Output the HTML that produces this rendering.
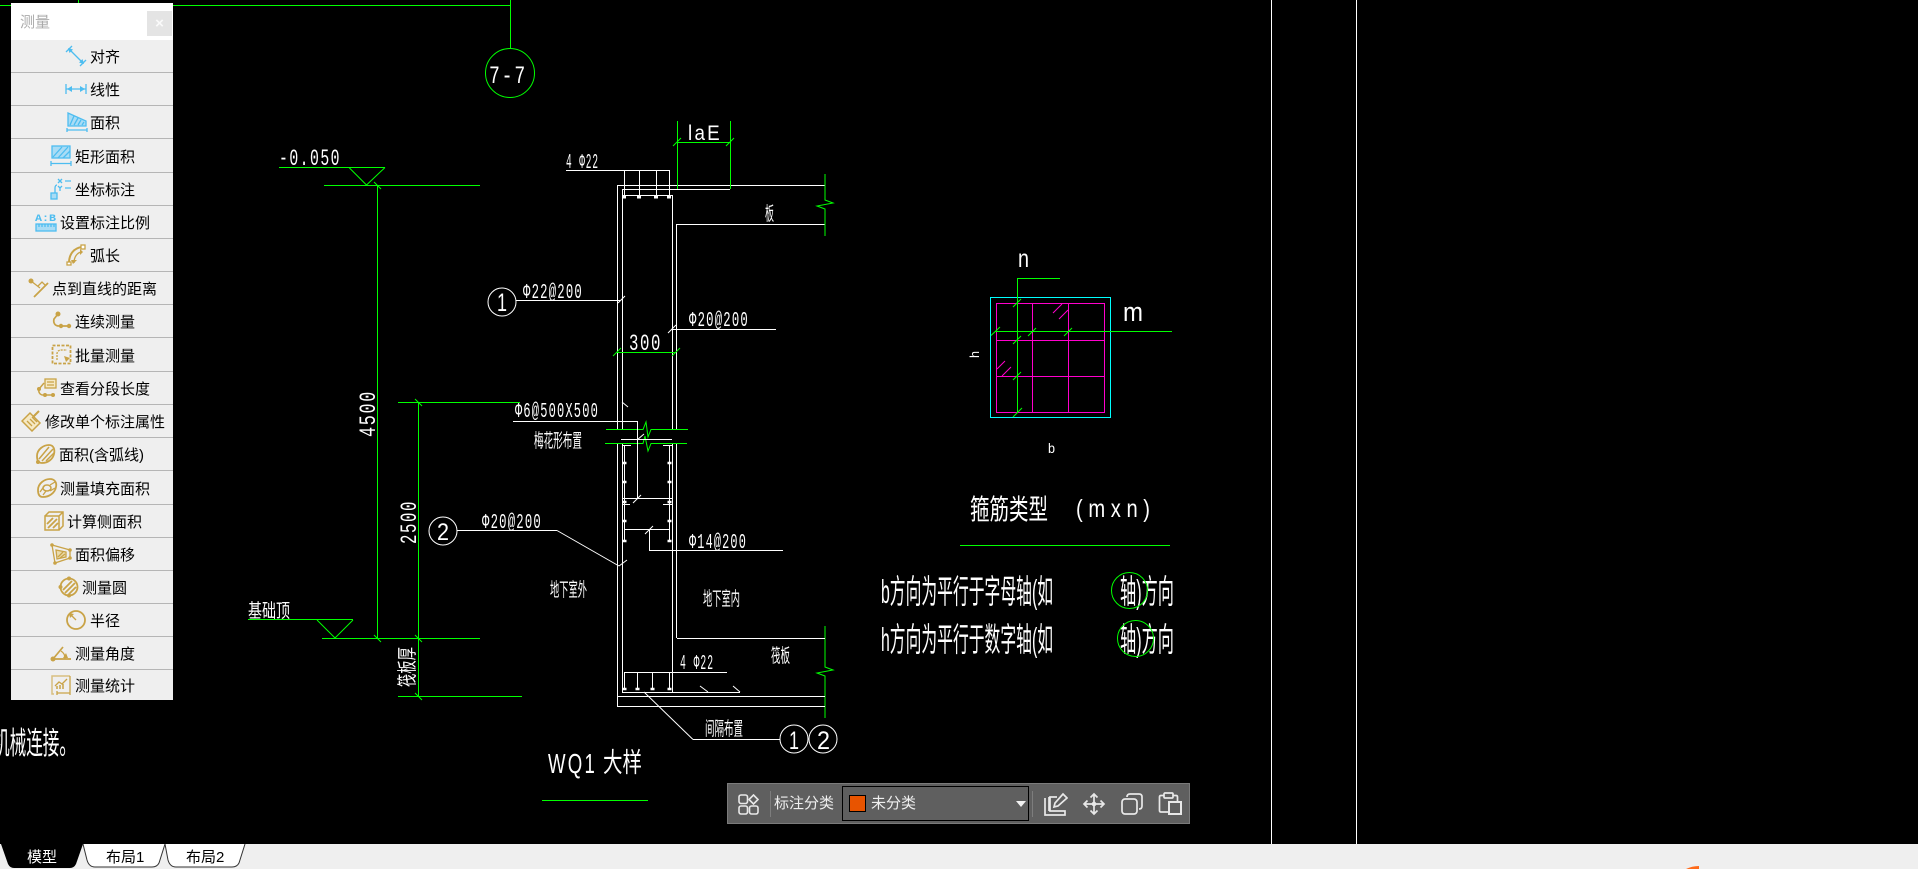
<!DOCTYPE html>
<html lang="zh"><head><meta charset="utf-8"><title>测量</title>
<style>
html,body{margin:0;padding:0;width:1918px;height:869px;overflow:hidden;background:#000}
body{position:relative;font-family:"Liberation Sans","WenQuanYi Zen Hei","Noto Sans CJK SC",sans-serif}
#cad{position:absolute;left:0;top:0}
#cad .l{font-family:"Liberation Sans",sans-serif;fill:#fff;letter-spacing:.12em}
#cad .n{font-family:"Liberation Mono",monospace;fill:#fff;letter-spacing:.1em}
#cad .c{font-family:"Noto Sans CJK SC",sans-serif;fill:#fff}
#cad .m{font-family:"Liberation Sans","Noto Sans CJK SC",sans-serif;fill:#fff}
.g{stroke:#0f0;fill:none;shape-rendering:crispEdges}
.w{stroke:#fff;fill:none;shape-rendering:crispEdges}
.ga{stroke:#0f0;fill:none}
.wa{stroke:#fff;fill:none}
#title{position:absolute;left:11px;top:3px;width:162px;height:37px;background:#fff;color:#aaa;font-size:15px;line-height:39px;text-indent:9px}
#x{position:absolute;left:136px;top:8px;width:25px;height:25px;background:#e4e4e4;color:#fafafa;text-align:center;line-height:25px;font-size:15px;font-weight:bold;text-indent:0}
.r{position:absolute;left:11px;width:162px;background:#efefef;border-bottom:1px solid #b5b5b5;color:#000;font-size:15px;box-sizing:content-box}
.r span{position:absolute;top:50%;margin-top:-9px;line-height:22px;white-space:nowrap}
.r svg{position:absolute;top:50%;margin-top:-11px;width:22px;height:22px;fill:none;stroke-width:1.3}
.b{stroke:#4dbdf0}.y{stroke:#c9a347}
.f1{fill:#4dbdf0;stroke:none}.f2{fill:#c9a347;stroke:none}
#strip{position:absolute;left:0;top:844px;width:1918px;height:25px;background:#efefef}
.tab{position:absolute;top:846px;font-size:15px;line-height:24px;white-space:nowrap}
#bar{position:absolute;left:727px;top:783px;width:461px;height:39px;background:#5f5f5f;border:1px solid #7b7b7b;color:#efefef;font-size:15px}
#bar span{position:absolute;line-height:20px;white-space:nowrap}
#dd{position:absolute;left:114px;top:2px;width:185px;height:33px;border:1px solid #000}
#sw{position:absolute;left:6px;top:8px;width:15px;height:15px;background:#e85400;border:1px solid #000}
#arrow{position:absolute;left:173px;top:14px;width:0;height:0;border-left:5px solid transparent;border-right:5px solid transparent;border-top:6px solid #f2f2f2}
.sep{position:absolute;width:1px;top:7px;height:26px;background:#7d7d7d}
</style></head><body>

<svg id="cad" width="1918" height="869" viewBox="0 0 1918 869">
<!-- frame lines -->
<path class="w" d="M1271.5 0V844M1356.5 0V844"/>
<path class="g" d="M0 5.5H510.5M510.5 0V49M78.5 0V5"/>
<circle class="ga" cx="510" cy="73" r="24.5"/>
<text class="n" x="489" y="83" font-size="25" textLength="38" lengthAdjust="spacingAndGlyphs">7-7</text>

<!-- left dims -->
<path class="g" d="M279 167.500H385M324 185.500H480M377.500 185V638M398 402.500H520M418.500 402V697M248 619.500H353M322 638.500H480M398 696.500H522"/>
<path class="ga" d="M349 167.500L366.500 185L385 167.500M317 620L335 638L353 620M374 182L381 189M374 635L381 642M415 399L422 406M415 635L422 642M415 693L422 700"/>
<text class="n" x="279" y="165" font-size="23" textLength="62" lengthAdjust="spacingAndGlyphs">-0.050</text>
<text class="n" transform="translate(375,437) rotate(-90)" font-size="23" textLength="47" lengthAdjust="spacingAndGlyphs">4500</text>
<text class="n" transform="translate(416,544) rotate(-90)" font-size="23" textLength="44" lengthAdjust="spacingAndGlyphs">2500</text>
<text class="c" x="248" y="617" font-size="19" textLength="42" lengthAdjust="spacingAndGlyphs">基础顶</text>
<text class="c" transform="translate(414,687) rotate(-90)" font-size="20" textLength="40" lengthAdjust="spacingAndGlyphs">筏板厚</text>
<circle class="wa" cx="443" cy="531" r="14"/>
<text class="m" x="437" y="540" font-size="24" textLength="12" lengthAdjust="spacingAndGlyphs">2</text>
<path class="w" d="M457 530.500H557"/>
<path class="wa" d="M557 530.500L619 566M619 566L627 560"/>
<text class="n" x="482" y="528" font-size="21" textLength="60" lengthAdjust="spacingAndGlyphs">Φ20@200</text>

<!-- wall -->
<path class="w" d="M617.500 185V429M622.500 189V429M672.500 195V429M676.500 224V429M617.500 443V706M622.500 443V692M672.500 443V692M676.500 443V638"/>
<path class="w" d="M617 185.500H825M622 189.500H730M622 195.500H672M566 170.500H669M624.500 170V197M639.500 170V197M656.500 170V197M669.500 170V197M677 224.500H825"/>
<path class="wa" d="M622 197h4M637 197h4M654 197h4M667 197h4" stroke-width="3"/>
<path class="g" d="M677.500 121V189M730.500 121V189M677 142.500H730M617 352.500H676"/>
<path class="ga" d="M673 146L681 138M726 146L734 138M613 356L621 348M672 356L680 348"/>
<polyline class="ga" points="825,174 825,200 833,203 817,206 825,209 825,236"/>
<polyline class="ga" points="825,626 825,667 833,670 817,673 825,676 825,718"/>
<text class="l" x="688" y="140" font-size="21" textLength="34" lengthAdjust="spacingAndGlyphs">laE</text>
<text class="n" x="566" y="168" font-size="21" textLength="33" lengthAdjust="spacingAndGlyphs">4 Φ22</text>
<text class="c" x="765" y="220" font-size="19" textLength="9" lengthAdjust="spacingAndGlyphs">板</text>
<circle class="wa" cx="502" cy="302" r="14"/>
<text class="m" x="497" y="311" font-size="25" textLength="10" lengthAdjust="spacingAndGlyphs">1</text>
<path class="w" d="M516 300.500H620M672 329.500H776"/>
<path class="wa" d="M618 303L625 296M668 333L676 325"/>
<text class="n" x="523" y="298" font-size="21" textLength="60" lengthAdjust="spacingAndGlyphs">Φ22@200</text>
<text class="n" x="689" y="326" font-size="21" textLength="60" lengthAdjust="spacingAndGlyphs">Φ20@200</text>
<text class="n" x="629" y="350" font-size="23" textLength="33" lengthAdjust="spacingAndGlyphs">300</text>

<!-- break -->
<polyline class="ga" points="606,429.500 643,429.500 646,422 648,437 651,429.500 688,429.500"/>
<polyline class="ga" points="605,443.500 643,443.500 645,436 648,451 651,443.500 687,443.500"/>
<path class="w" d="M513 421.500H637M637.500 421V498M621 439.500H672M622 445.500H631M663 445.500H672M624.500 445V541M669.500 445V541M622 498.500H672M622 504.500H630M663 504.500H672M624 529.500H669M649.500 529V550M649 550.500H783"/>
<path class="wa" d="M622 402L628 407M633 503L641 495M645 534L653 526M637 440L644 434"/>
<path class="wa" stroke-width="2.400" d="M622.500 463h4M622.500 482h4M622.500 502h4M622.500 521h4M622.500 541h4M667.500 463h4M667.500 482h4M667.500 502h4M667.500 521h4M667.500 541h4"/>
<text class="n" x="515" y="417" font-size="21" textLength="84" lengthAdjust="spacingAndGlyphs">Φ6@500X500</text>
<text class="c" x="534" y="447" font-size="19" textLength="48" lengthAdjust="spacingAndGlyphs">梅花形布置</text>
<text class="n" x="689" y="548" font-size="21" textLength="58" lengthAdjust="spacingAndGlyphs">Φ14@200</text>
<text class="c" x="550" y="596" font-size="19" textLength="37" lengthAdjust="spacingAndGlyphs">地下室外</text>
<text class="c" x="703" y="605" font-size="19" textLength="37" lengthAdjust="spacingAndGlyphs">地下室内</text>
<text class="c" x="771" y="662" font-size="19" textLength="19" lengthAdjust="spacingAndGlyphs">筏板</text>
<text class="n" x="680" y="669" font-size="21" textLength="34" lengthAdjust="spacingAndGlyphs">4 Φ22</text>

<!-- bottom -->
<path class="w" d="M677 638.500H825M624 672.500H727M624.500 672V690M637.500 672V690M652.500 672V690M669.500 672V690M622 692.500H740M617 696.500H825M617 706.500H825M693 739.500H780"/>
<path class="wa" d="M700 686L708 692M733 686L740 692M644 692L693 739.500"/>
<path class="wa" stroke-width="2.400" d="M622.500 689h4M635.500 689h4M650.500 689h4M667.500 689h4"/>
<circle class="wa" cx="794" cy="739" r="14"/>
<circle class="wa" cx="823" cy="739" r="14"/>
<text class="m" x="789" y="749" font-size="25" textLength="10" lengthAdjust="spacingAndGlyphs">1</text>
<text class="m" x="817" y="749" font-size="25" textLength="13" lengthAdjust="spacingAndGlyphs">2</text>
<text class="c" x="705" y="735" font-size="19" textLength="38" lengthAdjust="spacingAndGlyphs">间隔布置</text>
<text class="l" x="548" y="773" font-size="28" textLength="49" lengthAdjust="spacingAndGlyphs">WQ1</text>
<text class="c" x="603" y="772" font-size="27" textLength="39" lengthAdjust="spacingAndGlyphs">大样</text>
<path class="g" d="M542 800.500H648"/>
<text class="c" x="-7" y="754" font-size="31" textLength="83" lengthAdjust="spacingAndGlyphs">机械连接。</text>

<!-- stirrup -->
<rect x="990.500" y="297.500" width="120" height="120" fill="none" stroke="#0ff" shape-rendering="crispEdges"/>
<path fill="none" stroke="#f0c" shape-rendering="crispEdges" d="M996.500 303.500H1104.500V412.500H996.500ZM1032.500 303V412M1068.500 303V412M996 340.500H1104M996 376.500H1104"/>
<path fill="none" stroke="#f0c" d="M1053 313L1062 304M1059 319L1068 310M997 369L1005 361M1002 376L1011 367"/>
<path class="g" d="M1017 278.500H1060M1017.500 278V412M995 331.500H1172"/>
<path class="ga" d="M1013 307L1021 299M991 335.500L1000 327M1028 336L1036 328M1064 336L1072 328M1013 344L1021 336M1013 380L1021 372M1013 417L1022 408"/>
<text class="m" x="1018" y="267" font-size="25" textLength="11" lengthAdjust="spacingAndGlyphs">n</text>
<text class="m" x="1123" y="321" font-size="27" textLength="20" lengthAdjust="spacingAndGlyphs">m</text>
<text class="m" transform="translate(979,358) rotate(-90)" font-size="13" textLength="7" lengthAdjust="spacingAndGlyphs">h</text>
<text class="m" x="1048" y="453" font-size="14" textLength="7" lengthAdjust="spacingAndGlyphs">b</text>

<text class="c" x="970" y="519" font-size="28" textLength="78" lengthAdjust="spacingAndGlyphs">箍筋类型</text>
<text class="m" x="1076" y="517" font-size="25" textLength="74" lengthAdjust="spacingAndGlyphs">( m x n )</text>
<path class="g" d="M960 545.500H1170"/>
<text class="m" x="881" y="603" font-size="33" textLength="172" lengthAdjust="spacingAndGlyphs">b方向为平行于字母轴(如</text>
<text class="m" x="881" y="651" font-size="33" textLength="172" lengthAdjust="spacingAndGlyphs">h方向为平行于数字轴(如</text>
<text class="m" x="1120" y="603" font-size="33" textLength="54" lengthAdjust="spacingAndGlyphs">轴)方向</text>
<text class="m" x="1120" y="651" font-size="33" textLength="54" lengthAdjust="spacingAndGlyphs">轴)方向</text>
<circle class="ga" cx="1129.500" cy="590.500" r="18"/>
<circle class="ga" cx="1135.500" cy="638.500" r="18"/>
</svg>

<!-- measure panel -->
<div id="title">测量<div id="x">×</div></div>

<div class="r" style="top:40px;height:32px"><svg style="left:54px" class="b" viewBox="0 0 22 22"><path d="M1 7L7 1M15 21L21 15M4 4L18 18"/><path class="f1" d="M3 3l5 1.500-3.500 3.500zM19 19l-5-1.500 3.500-3.500z"/></svg><span style="left:79px">对齐</span></div>
<div class="r" style="top:73px;height:32px"><svg style="left:54px" class="b" viewBox="0 0 22 22"><path d="M1 6V16M21 6V16M1 11H21"/><path class="f1" d="M2 11l5-3v6zM20 11l-5-3v6z"/></svg><span style="left:79px">线性</span></div>
<div class="r" style="top:106px;height:32px"><svg style="left:55px" class="b" viewBox="0 0 22 22"><path d="M2 2L20 10V15H2Z" fill="#a9dcf5"/><path d="M4 14L8 5M8 14L12 7M12 14L15 9M16 14L18 11"/><path d="M1 17V21M21 17V21M1 19H21"/></svg><span style="left:79px">面积</span></div>
<div class="r" style="top:139px;height:33px"><svg style="left:39px" class="b" viewBox="0 0 22 22"><rect x="2" y="1" width="18" height="12" fill="#a9dcf5"/><path d="M3 12L12 2M8 13L18 2M13 13L20 6"/><path d="M1 16V21M21 16V21M1 18.500H21"/></svg><span style="left:64px">矩形面积</span></div>
<div class="r" style="top:173px;height:32px"><svg style="left:39px" class="b" viewBox="0 0 22 22"><path d="M8 1l4 4M12 1l-4 4M15 3h6M8 8l2 2 2-2M10 10v3M15 10h6M5 16V10C5 8 6 7 7 7"/><rect x="1" y="15" width="6" height="6" fill="#a9dcf5"/></svg><span style="left:64px">坐标标注</span></div>
<div class="r" style="top:206px;height:32px"><svg style="left:24px" class="b" viewBox="0 0 22 22"><text x="0" y="10" font-size="10" font-weight="bold" font-family="Liberation Mono" fill="#4dbdf0" stroke="none" textLength="21" lengthAdjust="spacingAndGlyphs">A:B</text><rect x="1" y="13" width="20" height="7" fill="#a9dcf5"/><path d="M4 13v3M7 13v3M10 13v3M13 13v3M16 13v3M19 13v3"/></svg><span style="left:49px">设置标注比例</span></div>
<div class="r" style="top:239px;height:32px"><svg style="left:55px" class="y" viewBox="0 0 22 22"><path stroke-width="2" d="M3 19C3 10 8 4 16 3"/><path d="M8 19C8 13 11 9 15 8"/><rect x="1" y="18" width="4" height="3" fill="#fff"/><rect x="15" y="1" width="4" height="4" fill="#fff"/><path class="f2" d="M7 20l4-4h-6zM17 8l-3-3v6z"/></svg><span style="left:79px">弧长</span></div>
<div class="r" style="top:272px;height:32px"><svg style="left:17px" class="y" viewBox="0 0 22 22"><circle class="f2" cx="3" cy="4" r="2.500"/><path d="M3 4L12 11"/><path stroke-width="1.800" d="M20 6L6 20"/><path d="M10 9L14 5L18 9"/></svg><span style="left:41px">点到直线的距离</span></div>
<div class="r" style="top:305px;height:32px"><svg style="left:40px" class="y" viewBox="0 0 22 22"><path stroke-width="1.700" d="M7 4L3 9C2 13 4 16 8 16H18"/><circle class="f2" cx="7" cy="4" r="2.500"/><circle class="f2" cx="10" cy="16" r="2.200"/><circle class="f2" cx="18" cy="16" r="2.200"/></svg><span style="left:64px">连续测量</span></div>
<div class="r" style="top:338px;height:33px"><svg style="left:40px" class="y" viewBox="0 0 22 22"><rect x="1.500" y="1.500" width="18" height="18" stroke-width="1.800" stroke-dasharray="3 1.500"/><path stroke-dasharray="2 1" d="M6 16V10C6 7 8 6 11 6H16"/><path class="f2" d="M13 12l6 2-4 4z"/></svg><span style="left:64px">批量测量</span></div>
<div class="r" style="top:372px;height:32px"><svg style="left:25px" class="y" viewBox="0 0 22 22"><path stroke-width="1.500" d="M8 6L3 12C2 15 4 18 7 18H17"/><circle class="f2" cx="3" cy="12" r="2"/><circle class="f2" cx="9" cy="18" r="2"/><circle class="f2" cx="17" cy="18" r="2"/><rect x="9" y="2" width="11" height="9" fill="#f6e9c4"/><path d="M11 5h7M11 8h7"/></svg><span style="left:49px">查看分段长度</span></div>
<div class="r" style="top:405px;height:32px"><svg style="left:10px" class="y" viewBox="0 0 22 22"><path stroke-width="1.500" d="M1 11L11 21L19 13L9 3Z" fill="#f6e9c4"/><path d="M6 11L11 16M9 9L14 14M11 7L16 12"/><path stroke-width="2" d="M12 7L18 1"/></svg><span style="left:34px">修改单个标注属性</span></div>
<div class="r" style="top:438px;height:32px"><svg style="left:23px" class="y" viewBox="0 0 22 22"><path stroke-width="1.800" d="M3 13C3 6 10 2 15 2C20 2 21 7 20 11C19 16 14 20 8 20C4 20 3 17 3 13Z"/><path stroke-width="1.500" d="M5 16L15 4M8 18L19 6M12 18L20 10"/><circle class="f2" cx="4" cy="19" r="2"/></svg><span style="left:48px">面积(含弧线)</span></div>
<div class="r" style="top:471px;height:33px"><svg style="left:25px" class="y" viewBox="0 0 22 22"><path stroke-width="1.800" d="M2 13C2 6 9 2 14 2C19 2 21 6 20 10C19 16 13 20 7 20C3 20 2 17 2 13Z"/><ellipse cx="11" cy="11" rx="4" ry="3" stroke-width="1.500"/><path d="M4 15L9 8M7 18L10 14M14 8L19 5M14 14L19 11"/></svg><span style="left:49px">测量填充面积</span></div>
<div class="r" style="top:505px;height:32px"><svg style="left:32px" class="y" viewBox="0 0 22 22"><path stroke-width="1.500" d="M2 6H16V20H2ZM2 6L6 2H20V16L16 20M16 6L20 2"/><path stroke-width="1.800" d="M4 14L10 8M5 18L14 9M10 18L15 13"/></svg><span style="left:56px">计算侧面积</span></div>
<div class="r" style="top:538px;height:32px"><svg style="left:39px" class="y" viewBox="0 0 22 22"><path stroke-width="1.300" d="M2 2L20 7V15L5 20Z"/><path d="M6 7L16 9V14L7 16Z" fill="#eadbac"/><path d="M8 14L13 9M10 15L15 11"/><circle class="f2" cx="2" cy="2" r="1.800"/><circle class="f2" cx="20" cy="7" r="1.800"/><circle class="f2" cx="20" cy="15" r="1.800"/><circle class="f2" cx="5" cy="20" r="1.800"/></svg><span style="left:64px">面积偏移</span></div>
<div class="r" style="top:571px;height:32px"><svg style="left:47px" class="y" viewBox="0 0 22 22"><circle cx="11" cy="11" r="8.500" stroke-width="1.800"/><path stroke-width="1.800" d="M5 14L14 5M7 17L17 7M11 18L18 11"/><circle class="f2" cx="11" cy="2.500" r="2"/><circle class="f2" cx="11" cy="19.500" r="2"/><circle class="f2" cx="2.500" cy="11" r="2"/></svg><span style="left:71px">测量圆</span></div>
<div class="r" style="top:604px;height:32px"><svg style="left:54px" class="y" viewBox="0 0 22 22"><circle cx="11" cy="11" r="9" stroke-width="1.800"/><path d="M5 5L11 11"/><path class="f2" d="M4 4l5 1-4 4z"/></svg><span style="left:79px">半径</span></div>
<div class="r" style="top:637px;height:32px"><svg style="left:39px" class="y" viewBox="0 0 22 22"><path stroke-width="1.700" d="M3 17L13 5M3 17H21"/><path d="M11 9C14 11 15 13 15 17"/><circle class="f2" cx="3" cy="17" r="2.500"/><path class="f2" d="M16 11l2 5h-5z"/></svg><span style="left:64px">测量角度</span></div>
<div class="r" style="top:670px;height:30px;border-bottom:0"><svg style="left:39px" class="y" viewBox="0 0 22 22"><path stroke-width="1.500" d="M20 2H2V20H4" stroke="#d9bf80"/><path d="M20 2V17"/><path d="M5 12L9 8L12 10L17 5"/><path stroke-width="1.500" d="M7 15V12M10 15V11M13 15V10"/><path d="M7 19H20M7 17V21M20 17V21"/></svg><span style="left:64px">测量统计</span></div>

<!-- bottom tabs -->
<div id="strip"></div>
<svg style="position:absolute;left:0;top:844px" width="300" height="25" viewBox="0 0 300 25">
<path d="M1 0H83L76 20Q74 24 70 24H14Q10 24 8 20Z" fill="#000"/>
<path d="M83 0L87 16Q89 23 95 23H152Q157 23 159 19L165 0" fill="#fff" stroke="#333"/>
<path d="M165 0L168 16Q170 23 176 23H232Q237 23 239 19L245 0" fill="#fff" stroke="#333"/>
</svg>
<div class="tab" style="left:27px;color:#fff">模型</div>
<div class="tab" style="left:106px;color:#000">布局1</div>
<div class="tab" style="left:186px;color:#000">布局2</div>
<svg style="position:absolute;left:1686px;top:866px" width="14" height="3"><path d="M0 3Q6 0 13 0L13 3Z" fill="#ff6a1a"/></svg>

<!-- bottom toolbar -->
<div id="bar">
<svg style="position:absolute;left:10px;top:10px" width="21" height="21" viewBox="0 0 21 21" fill="none" stroke="#e8e8e8" stroke-width="1.600"><rect x="1" y="1" width="8.500" height="8.500" rx="2"/><path d="M15.500 1L20 5.500L15.500 10L11 5.500Z"/><rect x="1" y="12" width="8.500" height="8" rx="2"/><rect x="11.500" y="12" width="8.500" height="8" rx="2"/></svg>
<div class="sep" style="left:42px"></div>
<span style="left:46px;top:10px">标注分类</span>
<div id="dd"><div id="sw"></div><span style="left:28px;top:7px">未分类</span><div id="arrow"></div></div>
<div class="sep" style="left:304px"></div>
<svg style="position:absolute;left:316px;top:8px" width="24" height="24" viewBox="0 0 24 24" fill="none" stroke="#e8e8e8" stroke-width="1.700"><path d="M1 6V23H21V19H6V5H13"/><path d="M5 5V19"/><path d="M10 15L11 11L19 2L23 6L14 14Z"/></svg>
<svg style="position:absolute;left:354px;top:8px" width="24" height="24" viewBox="0 0 24 24" fill="none" stroke="#e8e8e8" stroke-width="1.700"><path d="M12 2V22M2 12H22M8.500 5.500L12 2L15.500 5.500M8.500 18.500L12 22L15.500 18.500M5.500 8.500L2 12L5.500 15.500M18.500 8.500L22 12L18.500 15.500"/><circle cx="12" cy="12" r="1.500" fill="#e8e8e8"/></svg>
<svg style="position:absolute;left:392px;top:8px" width="24" height="24" viewBox="0 0 24 24" fill="none" stroke="#e8e8e8" stroke-width="1.700"><rect x="2" y="7" width="15" height="15" rx="3"/><path d="M7 5C7 3 8 2 10 2H19C21 2 22 3 22 5V14C22 16 21 17 19 17"/></svg>
<svg style="position:absolute;left:430px;top:8px" width="24" height="24" viewBox="0 0 24 24" fill="none" stroke="#e8e8e8" stroke-width="1.700"><path d="M11 20H3C2 20 1.500 19.500 1.500 18.500V5C1.500 4 2 3.500 3 3.500H6M15 3.500H18C19 3.500 19.500 4 19.500 5V9"/><rect x="6" y="1" width="9" height="5" rx="1"/><rect x="11" y="10" width="12" height="12" stroke-width="2"/></svg>
</div>
</body></html>
